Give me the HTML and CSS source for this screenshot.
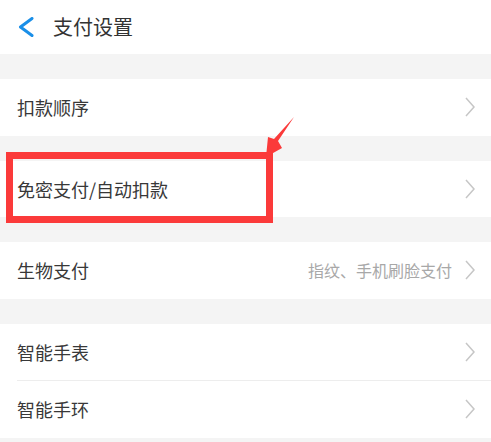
FILE: index.html
```html
<!DOCTYPE html>
<html lang="zh-CN">
<head>
  <meta charset="UTF-8" />
  <meta name="viewport" content="width=device-width, initial-scale=1.0"/>
  <title>支付设置</title>
  <link rel="stylesheet" href="styles.css">
</head>
<body>
  <div class="page">
    <header class="topbar">
      <svg class="back" width="16" height="20" viewBox="0 0 16 20">
        <polyline points="14,1.5 2.5,10 14,18.5" />
      </svg>
      <h1 class="title">支付设置</h1>
    </header>

    <div class="group">
      <div class="row">
        <span class="label">扣款顺序</span>
        <svg class="arrow" width="10" height="20" viewBox="0 0 10 20"><polyline points="1,1 9,10 1,19" /></svg>
      </div>
    </div>

    <div class="group">
      <div class="row">
        <span class="label">免密支付/自动扣款</span>
        <svg class="arrow" width="10" height="20" viewBox="0 0 10 20"><polyline points="1,1 9,10 1,19" /></svg>
      </div>
    </div>

    <div class="group">
      <div class="row">
        <span class="label">生物支付</span>
        <span class="extra">
          <span class="hint">指纹、手机刷脸支付</span>
          <svg class="arrow" width="10" height="20" viewBox="0 0 10 20"><polyline points="1,1 9,10 1,19" /></svg>
        </span>
      </div>
    </div>

    <div class="group">
      <div class="row">
        <span class="label">智能手表</span>
        <svg class="arrow" width="10" height="20" viewBox="0 0 10 20"><polyline points="1,1 9,10 1,19" /></svg>
      </div>
      <div class="row">
        <span class="label">智能手环</span>
        <svg class="arrow" width="10" height="20" viewBox="0 0 10 20"><polyline points="1,1 9,10 1,19" /></svg>
      </div>
    </div>

    <!-- annotation drawn over the screenshot -->
    <div class="mark-box"></div>
    <svg class="mark-arrow" width="40" height="50" viewBox="260 112 40 50">
      <polygon points="294,117 278,141 282,148 266,157 268,137 274,139" />
    </svg>
  </div>
</body>
</html>
```

FILE: styles.css
```css
body {
  margin: 0;
  padding: 0;
  background: #f4f4f4;
  font-family: "Noto Sans CJK SC", "Noto Sans", sans-serif;
  color: #333;
}

.page {
  position: relative;
  min-height: 442px;
}

.topbar {
  height: 54px;
  background: #fff;
  display: flex;
  align-items: center;
  padding-left: 18px;
}

.back polyline {
  fill: none;
  stroke: #1a8fe8;
  stroke-width: 3;
  stroke-linecap: round;
  stroke-linejoin: round;
}

.title {
  margin: 0 0 0 19px;
  font-size: 20px;
  font-weight: normal;
  color: #333;
  line-height: 1;
}

.group {
  margin-top: 25px;
  background: #fff;
}

.row {
  height: 56.5px;
  margin-left: 17px;
  padding-right: 16px;
  display: flex;
  align-items: center;
  justify-content: space-between;
}

.row + .row {
  border-top: 1px solid #ededed;
}

.label {
  font-size: 18px;
  color: #383838;
}

.extra {
  display: flex;
  align-items: center;
  gap: 13px;
}

.hint {
  font-size: 16px;
  color: #a8a8a8;
}

.arrow polyline {
  fill: none;
  stroke: #c6c6c6;
  stroke-width: 1.5;
}

.mark-box {
  position: absolute;
  left: 6px;
  top: 152px;
  width: 253px;
  height: 57px;
  border: 7px solid #fb3a3a;
}

.mark-arrow {
  position: absolute;
  left: 260px;
  top: 112px;
}

.mark-arrow polygon {
  fill: #fb3a3a;
}
```
